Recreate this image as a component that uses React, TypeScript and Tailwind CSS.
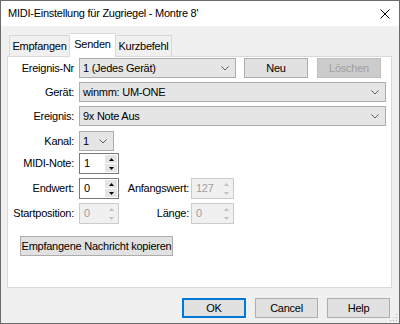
import React from 'react';

const font = { fontFamily: '"Liberation Sans", Arial, sans-serif' };

function Chevron({ color = '#606060' }: { color?: string }) {
  return (
    <svg width="8" height="5" viewBox="0 0 8 5" className="shrink-0">
      <path d="M0.5 0.5 L4 4 L7.5 0.5" fill="none" stroke={color} strokeWidth="1" />
    </svg>
  );
}

function Combo({ text, w }: { text: string; w: string }) {
  return (
    <div className={`${w} h-[20px] bg-[#e5e5e5] border border-[#adadad] flex items-center justify-between pl-[3px] pr-[6px]`}>
      <span className="leading-none">{text}</span>
      <Chevron />
    </div>
  );
}

function Spin({ value, disabled, w = 'w-[40px]' }: { value: string; disabled?: boolean; w?: string }) {
  const tri = disabled ? '#c0c0c0' : '#000000';
  return (
    <div
      className={`${w} h-[21px] flex border ${
        disabled ? 'border-[#cccccc] bg-[#f0f0f0] text-[#a0a0a0]' : 'border-[#7a7a7a] bg-white text-black'
      }`}
    >
      <div className="flex-1 flex items-center pl-[4px] leading-none">{value}</div>
      <div className="w-[14px] flex flex-col gap-[1px] p-[1px]">
        <div className={`flex-1 flex items-center justify-center ${disabled ? 'bg-[#f0f0f0]' : 'bg-[#e5e5e5]'}`}>
          <svg width="5" height="3" viewBox="0 0 5 3">
            <path d="M0 3 L2.5 0 L5 3 Z" fill={tri} />
          </svg>
        </div>
        <div className={`flex-1 flex items-center justify-center ${disabled ? 'bg-[#f0f0f0]' : 'bg-[#e5e5e5]'}`}>
          <svg width="5" height="3" viewBox="0 0 5 3">
            <path d="M0 0 L2.5 3 L5 0 Z" fill={tri} />
          </svg>
        </div>
      </div>
    </div>
  );
}

function Label({ children }: { children: React.ReactNode }) {
  return <div className="w-[66px] text-right shrink-0 leading-none whitespace-nowrap">{children}</div>;
}

function Btn({ children, className = '' }: { children: React.ReactNode; className?: string }) {
  return (
    <div className={`h-[20px] flex items-center justify-center bg-[#e1e1e1] border border-[#adadad] leading-none whitespace-nowrap ${className}`}>
      {children}
    </div>
  );
}

export default function App() {
  return (
    <div style={font} className="w-[400px] h-[324px] border border-[#6b6b6b] bg-[#f0f0f0] flex flex-col text-[11px] tracking-[-0.25px] text-black relative">
      <div className="h-[25px] bg-white flex items-center justify-between pl-[7px] pr-[9px]">
        <span className="leading-none">MIDI-Einstellung für Zugriegel - Montre 8'</span>
        <svg width="10" height="10" viewBox="0 0 10 10">
          <path d="M0.5 0.5 L9.5 9.5 M9.5 0.5 L0.5 9.5" stroke="#000" strokeWidth="1" />
        </svg>
      </div>

      <div className="mt-[7px] pl-[8px] h-[23px] flex items-end whitespace-nowrap">
        <div className="w-[61px] h-[21px] border border-b-0 border-[#d9d9d9] bg-[#f0f0f0] flex items-center justify-center leading-none">
          Empfangen
        </div>
        <div className="w-[46px] h-[24px] -mb-[1px] border border-b-0 border-l-0 border-[#d9d9d9] bg-white flex items-start pt-[5px] justify-center leading-none relative z-10">
          Senden
        </div>
        <div className="w-[56px] h-[21px] border border-b-0 border-l-0 border-[#d9d9d9] bg-[#f0f0f0] flex items-center justify-center leading-none">
          Kurzbefehl
        </div>
      </div>

      <div className="ml-[6px] w-[385px] h-[232px] bg-white border border-[#d9d9d9] flex flex-col">
        <div className="mt-[1px] flex items-center">
          <Label>Ereignis-Nr</Label>
          <div className="ml-[5px]">
            <Combo text="1 (Jedes Gerät)" w="w-[157px]" />
          </div>
          <Btn className="ml-[8px] w-[64px]">Neu</Btn>
          <div className="ml-[9px] w-[64px] h-[20px] flex items-center justify-center bg-[#cccccc] border border-[#bfbfbf] text-[#a0a0a0] leading-none">
            Löschen
          </div>
        </div>

        <div className="mt-[4px] flex items-center">
          <Label>Gerät:</Label>
          <div className="ml-[5px]">
            <Combo text="winmm: UM-ONE" w="w-[307px]" />
          </div>
        </div>

        <div className="mt-[4px] flex items-center">
          <Label>Ereignis:</Label>
          <div className="ml-[5px]">
            <Combo text="9x Note Aus" w="w-[307px]" />
          </div>
        </div>

        <div className="mt-[5px] flex items-center">
          <Label>Kanal:</Label>
          <div className="ml-[5px]">
            <Combo text="1" w="w-[35px]" />
          </div>
        </div>

        <div className="mt-[2px] flex items-center">
          <Label>MIDI-Note:</Label>
          <div className="ml-[5px]">
            <Spin value="1" />
          </div>
        </div>

        <div className="mt-[4px] flex items-center">
          <Label>Endwert:</Label>
          <div className="ml-[5px]">
            <Spin value="0" />
          </div>
          <div className="ml-[8px] w-[62px] text-right leading-none whitespace-nowrap">Anfangswert:</div>
          <div className="ml-[2px]">
            <Spin value="127" disabled w="w-[43px]" />
          </div>
        </div>

        <div className="mt-[4px] flex items-center">
          <Label>Startposition:</Label>
          <div className="ml-[5px]">
            <Spin value="0" disabled />
          </div>
          <div className="ml-[8px] w-[62px] text-right leading-none whitespace-nowrap">Länge:</div>
          <div className="ml-[2px]">
            <Spin value="0" disabled w="w-[43px]" />
          </div>
        </div>

        <div className="mt-[12px] ml-[12px]">
          <Btn className="w-[153px] h-[19px]">Empfangene Nachricht kopieren</Btn>
        </div>
      </div>

      <div className="mt-[10px] pr-[9px] flex justify-end gap-[9px]">
        <div className="w-[64px] h-[20px] flex items-center justify-center bg-[#e1e1e1] border-2 border-[#0078d7] leading-none">
          OK
        </div>
        <Btn className="w-[63px]">Cancel</Btn>
        <Btn className="w-[63px]">Help</Btn>
      </div>

      <svg width="10" height="10" viewBox="0 0 10 10" className="absolute right-[1px] bottom-[1px]">
        <rect x="8" y="2" width="1" height="1" fill="#b0b0b0" />
        <rect x="5" y="5" width="1" height="1" fill="#b0b0b0" />
        <rect x="8" y="5" width="1" height="1" fill="#b0b0b0" />
        <rect x="2" y="8" width="1" height="1" fill="#b0b0b0" />
        <rect x="5" y="8" width="1" height="1" fill="#b0b0b0" />
        <rect x="8" y="8" width="1" height="1" fill="#b0b0b0" />
      </svg>
    </div>
  );
}
